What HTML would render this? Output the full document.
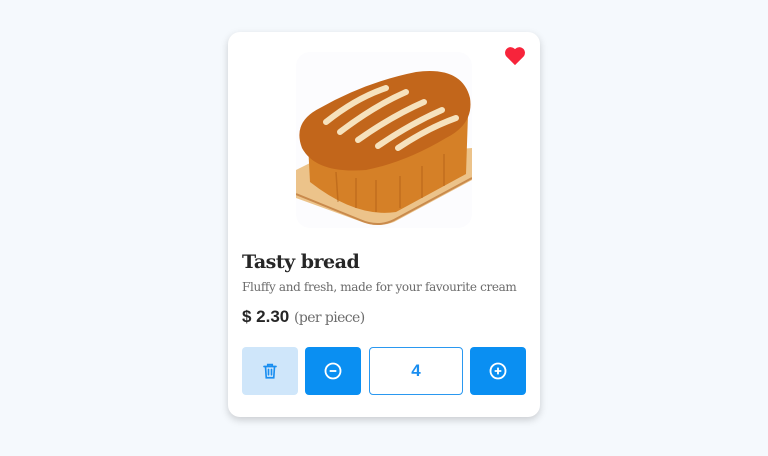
<!DOCTYPE html>
<html><head><style>
body{margin:0;width:768px;height:456px;background:#f5f9fd;font-family:"Liberation Sans",sans-serif;position:relative;overflow:hidden}
.card{position:absolute;left:228px;top:32px;width:312px;height:385px;background:#fff;border-radius:12px;box-shadow:0 3px 8px rgba(0,0,0,.18)}
.img{position:absolute;left:68px;top:20px;width:176px;height:176px;border-radius:14px;background:#fcfcfe;overflow:hidden}
.heart{position:absolute;left:276px;top:14px}
h1{position:absolute;left:14px;top:219px;margin:0;font:bold 19px "DejaVu Serif",serif;color:#262626;letter-spacing:-0.5px}
.desc{position:absolute;left:14px;top:248px;font:12px "DejaVu Serif",serif;color:#6b6b6b;letter-spacing:-0.35px}
.price{position:absolute;left:14px;top:275px;font:bold 17px "Liberation Sans",sans-serif;color:#262626}
.price span{font:normal 14px "DejaVu Serif",serif;color:#6b6b6b;letter-spacing:-0.6px}
.b{position:absolute;top:315px;height:48px;border-radius:4px;display:flex;align-items:center;justify-content:center}
</style></head><body>
<div class="card">
<div class="img"><svg width="176" height="176" viewBox="0 0 176 176">
<path d="M0 118 L20 108 L176 96 L176 128 L98 170 Q82 176 66 170 L0 146Z" fill="#ecc38a"/>
<path d="M0 142 L64 168 Q82 176 98 168 L176 126" stroke="#c98a4c" stroke-width="2" fill="none"/>
<path d="M12 92 L14 130 Q60 166 100 160 L170 122 L172 62 Z" fill="#d58027"/>
<path d="M40 120 L42 150 M60 126 L60 156 M80 128 L80 160 M104 124 L104 156 M126 114 L126 146 M148 102 L148 134" stroke="#a85812" stroke-width="1.5" opacity=".45"/>
<path d="M6 96 Q-4 70 24 56 Q70 30 120 20 Q166 14 174 46 Q178 72 150 86 Q110 110 70 118 Q20 122 6 96Z" fill="#c2661b"/>
<path d="M30 70 Q60 46 90 36 M44 80 Q78 54 110 40 M62 88 Q96 64 128 50 M82 94 Q114 72 146 58 M102 96 Q132 76 160 66" stroke="#f6e2bd" stroke-width="6" stroke-linecap="round" fill="none"/>
</svg></div>
<svg class="heart" width="22" height="20" viewBox="0 0 24 22"><path d="M12 21 L2.5 11.5 A5.6 5.6 0 0 1 12 3.5 A5.6 5.6 0 0 1 21.5 11.5Z" fill="#f7243b"/></svg>
<h1>Tasty bread</h1>
<div class="desc">Fluffy and fresh, made for your favourite cream</div>
<div class="price">$ 2.30 <span>(per piece)</span></div>
<div class="b" style="left:14px;width:56px;background:#cfe6fa"><svg width="18" height="18" viewBox="0 0 24 24" fill="none" stroke="#1a8ef0" stroke-width="2.2" stroke-linecap="round"><path d="M4 6h16M9 6V3.5h6V6M6 6l1 15h10l1-15M10 10v7M14 10v7"/></svg></div>
<div class="b" style="left:77px;width:56px;background:#0a8ff2"><svg width="20" height="20" viewBox="0 0 24 24" fill="none" stroke="#fff" stroke-width="2.2"><circle cx="12" cy="12" r="9"/><path d="M8 12h8"/></svg></div>
<div class="b" style="left:141px;width:92px;height:46px;border:1px solid #2a98f0;background:#fff;font:bold 17px 'Liberation Sans',sans-serif;color:#1a8ef0">4</div>
<div class="b" style="left:242px;width:56px;background:#0a8ff2"><svg width="20" height="20" viewBox="0 0 24 24" fill="none" stroke="#fff" stroke-width="2.2"><circle cx="12" cy="12" r="9"/><path d="M8 12h8M12 8v8"/></svg></div>
</div>
</body></html>
